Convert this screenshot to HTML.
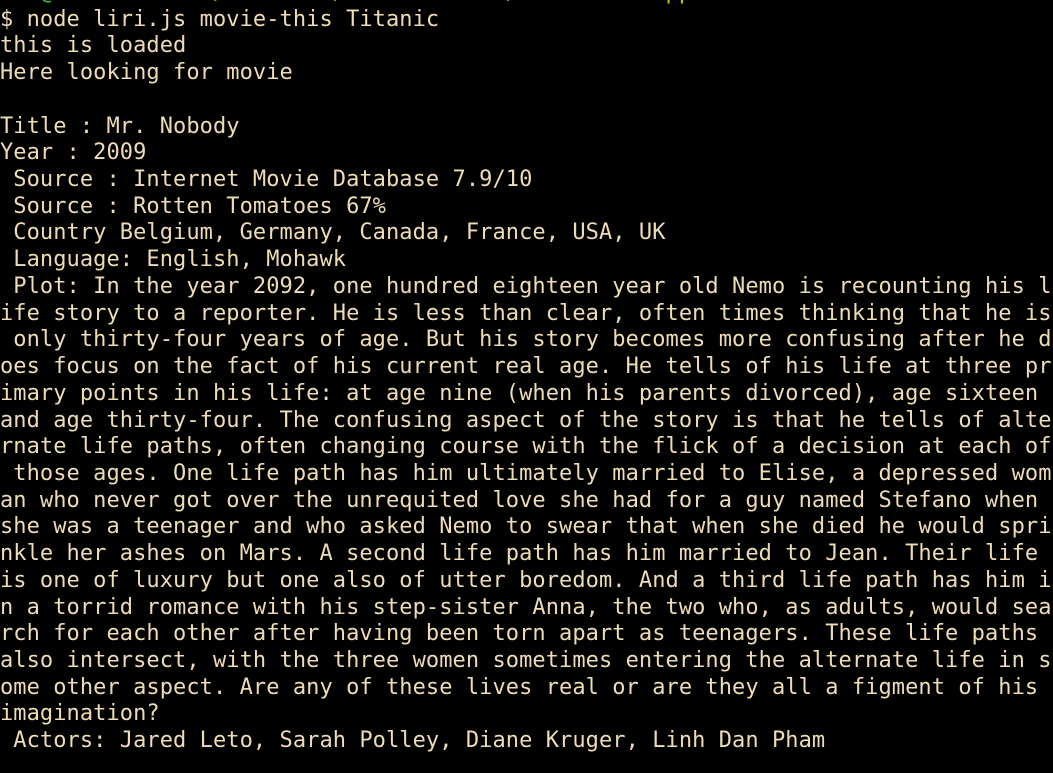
<!DOCTYPE html>
<html><head><meta charset="utf-8"><style>
html,body{margin:0;padding:0;background:#000;width:1053px;height:773px;overflow:hidden}
pre{position:absolute;left:0;top:-20px;margin:0;font-family:"DejaVu Sans Mono","Liberation Mono",monospace;font-size:22px;letter-spacing:0.065px;line-height:26.72px;color:#eddcb4;white-space:pre}
.g{color:#3fbf3f}.y{color:#c8c800}
</style></head><body><pre><span class="g">mlz@it-NetBook</span> <span class="y">~/Homework/Instructions/liri-node-app</span>
$ node liri.js movie-this Titanic
this is loaded
Here looking for movie

Title : Mr. Nobody
Year : 2009
 Source : Internet Movie Database 7.9/10
 Source : Rotten Tomatoes 67%
 Country Belgium, Germany, Canada, France, USA, UK
 Language: English, Mohawk
 Plot: In the year 2092, one hundred eighteen year old Nemo is recounting his l
ife story to a reporter. He is less than clear, often times thinking that he is
 only thirty-four years of age. But his story becomes more confusing after he d
oes focus on the fact of his current real age. He tells of his life at three pr
imary points in his life: at age nine (when his parents divorced), age sixteen 
and age thirty-four. The confusing aspect of the story is that he tells of alte
rnate life paths, often changing course with the flick of a decision at each of
 those ages. One life path has him ultimately married to Elise, a depressed wom
an who never got over the unrequited love she had for a guy named Stefano when 
she was a teenager and who asked Nemo to swear that when she died he would spri
nkle her ashes on Mars. A second life path has him married to Jean. Their life 
is one of luxury but one also of utter boredom. And a third life path has him i
n a torrid romance with his step-sister Anna, the two who, as adults, would sea
rch for each other after having been torn apart as teenagers. These life paths 
also intersect, with the three women sometimes entering the alternate life in s
ome other aspect. Are any of these lives real or are they all a figment of his 
imagination?
 Actors: Jared Leto, Sarah Polley, Diane Kruger, Linh Dan Pham</pre></body></html>
